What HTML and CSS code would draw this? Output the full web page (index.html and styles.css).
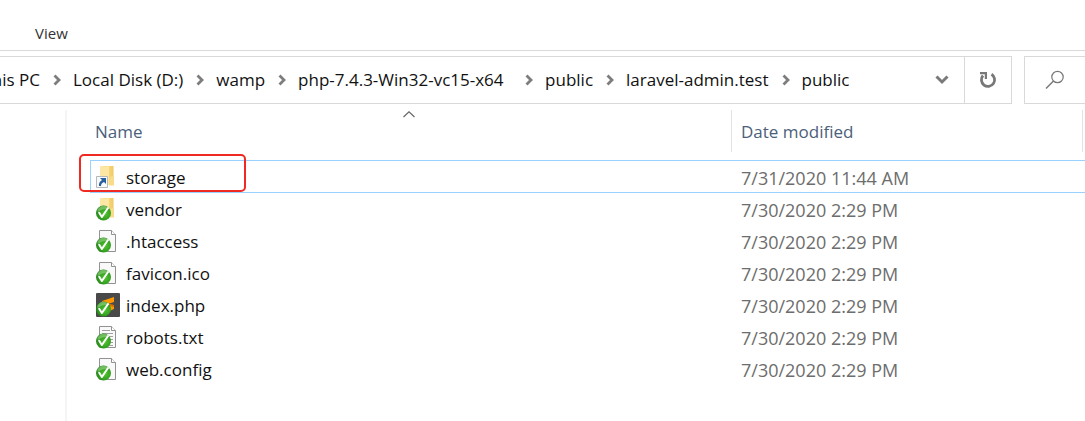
FILE: index.html
```html
<!DOCTYPE html>
<html lang="en">
<head>
<meta charset="utf-8">
<title>public</title>
<link rel="stylesheet" href="styles.css">
</head>
<body>
<svg class="defs" aria-hidden="true">
  <defs>
    <linearGradient id="folder-back" x1="0" y1="0" x2="1" y2="0"><stop offset="0" stop-color="#fbe08c"/><stop offset="1" stop-color="#efc862"/></linearGradient>
    <linearGradient id="folder-front" x1="0" y1="0" x2="1" y2="1"><stop offset="0" stop-color="#ffebae"/><stop offset="1" stop-color="#f8d578"/></linearGradient>
    <radialGradient id="green" cx=".6" cy=".55" r=".6"><stop offset="0" stop-color="#55c334"/><stop offset=".6" stop-color="#35a321"/><stop offset="1" stop-color="#23821b"/></radialGradient>
    <symbol id="folder" viewBox="0 0 24 24"><path d="M4 1h6v19H4z" fill="url(#folder-front)"/><path d="M10 1h7.500v19H10z" fill="url(#folder-back)"/><path d="M4 4 13 1v19H4z" fill="#fde7a4"/><path d="M14 12 18 10.500v10h-5z" fill="#f8dc8b"/></symbol>
    <symbol id="page" viewBox="0 0 24 24"><path d="M3.500 1.500h12l4 4v17h-16z" fill="#f9f9f9" stroke="#929292"/><path d="M15.500 1.500v4h4" fill="#fff" stroke="#929292"/></symbol>
    <symbol id="lines" viewBox="0 0 24 24"><path d="M6 5.500h8M6 8.500h11M6 11.500h11M6 14.500h11M6 17.500h11M6 20.500h11" stroke="#a0a0a0" fill="none"/></symbol>
    <symbol id="tick" viewBox="0 0 24 24"><circle cx="7.500" cy="16" r="7.500" fill="url(#green)"/><path d="M1.500 12.500a7 7 0 0 1 12-.5q-6-1-12 3z" fill="#a7dc94" opacity=".55"/><path d="M3.200 15.800 5.900 20 12 11" stroke="#fff" stroke-width="2" stroke-linejoin="round" stroke-linecap="round" fill="none"/></symbol>
    <symbol id="shortcut" viewBox="0 0 24 24"><path d="M.5 11.500h11v11H.5z" fill="#f7f9fb" stroke="#b5b8bb"/><path d="M4 13h6v6l-2-2q-3 1-3 4H3q-.5-4 3-6z" fill="#285f9f"/></symbol>
    <symbol id="editor" viewBox="0 0 24 24"><rect width="24" height="24" rx="1" fill="#494949"/><path d="M6 8 18 4v5l-6 2 6 1v4L9 20v-5l4-2-7-2z" fill="#ff9800"/><path d="M11 10.800 18 12v2l-7-2z" fill="#d96c00"/></symbol>
    <symbol id="sep" viewBox="0 0 8 12"><path d="m1.500 1.500 4.500 4.500-4.500 4.500" fill="none" stroke="#7d7d7d" stroke-width="2.800"/></symbol>
  </defs>
</svg>

<header class="ribbon"><button class="tab" type="button">View</button></header>

<div class="toolbar">
  <div class="address">
    <nav class="crumbs" aria-label="Path">
      <a class="crumb crumb-cut" href="#">This PC</a><svg class="sep"><use href="#sep"/></svg>
      <a class="crumb" href="#">Local Disk (D:)</a><svg class="sep"><use href="#sep"/></svg>
      <a class="crumb" href="#">wamp</a><svg class="sep"><use href="#sep"/></svg>
      <a class="crumb crumb-long" href="#">php-7.4.3-Win32-vc15-x64</a><svg class="sep"><use href="#sep"/></svg>
      <a class="crumb" href="#">public</a><svg class="sep"><use href="#sep"/></svg>
      <a class="crumb" href="#">laravel-admin.test</a><svg class="sep"><use href="#sep"/></svg>
      <a class="crumb" href="#">public</a>
    </nav>
    <button class="history" type="button" aria-label="Previous locations"><svg width="14" height="10" viewBox="0 0 14 10"><path d="m1.500 1.500 5.500 5.500 5.500-5.500" fill="none" stroke="#7a7a7a" stroke-width="3"/></svg></button>
    <button class="refresh" type="button" aria-label="Refresh"><svg width="18" height="18" viewBox="0 0 18 18"><path d="M12.500 3.200A6.600 6.600 0 1 1 4 4.500" fill="none" stroke="#787878" stroke-width="2.800"/><path d="M1 1h7v7H5.800V3.200H1z" fill="#787878"/></svg></button>
  </div>
  <button class="search" type="button" aria-label="Search"><svg width="20" height="20" viewBox="0 0 20 20"><circle cx="12.500" cy="7" r="5.700" fill="none" stroke="#777" stroke-width="1.200"/><path d="M8.500 11 1 18.500" stroke="#777" stroke-width="1.400"/></svg></button>
</div>

<div class="content">
  <aside class="tree"></aside>
  <main class="files">
    <table class="list">
      <colgroup><col class="col-name"><col class="col-date"><col></colgroup>
      <thead>
        <tr>
          <th scope="col">Name<svg class="sort" width="12" height="7" viewBox="0 0 12 7"><path d="M.5 6 6 .8 11.500 6" fill="none" stroke="#666" stroke-width="1.200"/></svg></th>
          <th scope="col">Date modified</th>
          <th></th>
        </tr>
      </thead>
      <tbody>
        <tr class="selected"><td><span class="file"><svg class="icon"><use href="#folder"/><use href="#shortcut"/></svg>storage</span><span class="highlight"></span></td><td>7/31/2020 11:44 AM</td><td></td></tr>
        <tr><td><span class="file"><svg class="icon"><use href="#folder"/><use href="#tick"/></svg>vendor</span></td><td>7/30/2020 2:29 PM</td><td></td></tr>
        <tr><td><span class="file"><svg class="icon"><use href="#page"/><use href="#tick"/></svg>.htaccess</span></td><td>7/30/2020 2:29 PM</td><td></td></tr>
        <tr><td><span class="file"><svg class="icon"><use href="#page"/><use href="#tick"/></svg>favicon.ico</span></td><td>7/30/2020 2:29 PM</td><td></td></tr>
        <tr><td><span class="file"><svg class="icon"><use href="#editor"/><use href="#tick"/></svg>index.php</span></td><td>7/30/2020 2:29 PM</td><td></td></tr>
        <tr><td><span class="file"><svg class="icon"><use href="#page"/><use href="#lines"/><use href="#tick"/></svg>robots.txt</span></td><td>7/30/2020 2:29 PM</td><td></td></tr>
        <tr><td><span class="file"><svg class="icon"><use href="#page"/><use href="#tick"/></svg>web.config</span></td><td>7/30/2020 2:29 PM</td><td></td></tr>
      </tbody>
    </table>
  </main>
</div>
</body>
</html>
```

FILE: styles.css
```css
* { box-sizing: border-box; }
body {
  margin: 0;
  min-height: 100vh;
  display: flex;
  flex-direction: column;
  overflow-x: hidden;
  background: #fff;
  color: #111;
  font: 17px/24px "Open Sans", "Noto Sans", sans-serif;
}
button { padding: 0; border: 0; background: none; font: inherit; color: inherit; }
.defs { position: absolute; width: 0; height: 0; }

.ribbon { padding: 21px 35px 5px; border-bottom: 1px solid #dadada; }
.tab { display: block; font-size: 15px; line-height: 24px; color: #333; }

.toolbar { display: flex; gap: 12px; height: 48px; margin-top: 5px; }
.address {
  flex: 1;
  min-width: 0;
  display: flex;
  border: 1px solid #d9d9d9;
  border-left: 0;
}
.crumbs { flex: 1; min-width: 0; display: flex; align-items: center; overflow: hidden; }
.crumb { flex: none; color: inherit; text-decoration: none; white-space: nowrap; }
.crumb-cut { width: 40px; display: flex; justify-content: flex-end; }
.crumb-long { min-width: 214px; }
.sep { flex: none; width: 8px; height: 12px; margin: 0 12px 0 13px; }
.history, .refresh { display: grid; place-items: center; }
.history { width: 44px; }
.refresh { width: 47px; border-left: 1px solid #d9d9d9; }
.search { width: 61px; border: 1px solid #d9d9d9; border-right: 0; display: grid; place-items: center; }

.content { flex: 1; display: flex; margin-top: 6px; }
.tree { flex: none; width: 67px; border-right: 2px solid #f5f5f5; }
.files { flex: 1; min-width: 0; padding-left: 23px; }
.list { width: 100%; table-layout: fixed; border-collapse: separate; border-spacing: 0; }
.col-name { width: 642px; }
.col-date { width: 351px; }
th {
  position: relative;
  height: 42px;
  padding: 2px 0 0 5px;
  border-right: 1px solid #e3e3e3;
  font-weight: 400;
  text-align: left;
  color: #4c607a;
}
th:last-child { border-right: 0; }
th + th, td + td { padding-left: 9px; }
.sort { position: absolute; top: 1px; left: calc(50% - 8px); }
td { position: relative; height: 32px; padding: 2px 0 0 6px; color: #6d6d6d; white-space: nowrap; }
td + td { font-size: 18px; }
tbody::before { content: ""; display: block; height: 8px; }
.selected td { height: 33px; border: solid #99d1ff; border-width: 1px 0; }
.selected td:first-child { border-left-width: 1px; padding-left: 5px; }
.file { display: flex; align-items: center; gap: 6px; height: 24px; color: #111; }
.icon { flex: none; width: 24px; height: 24px; margin-bottom: 2px; }
.highlight {
  position: absolute;
  top: -7px;
  left: -12px;
  width: 167px;
  height: 38px;
  border: 2px solid #f02a22;
  border-radius: 5px;
}
```
